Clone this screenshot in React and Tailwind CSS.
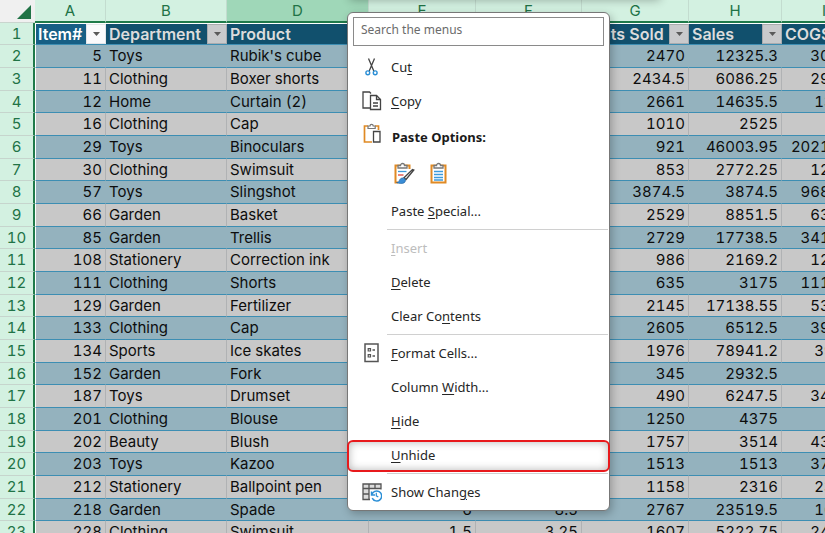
import { clsx } from 'clsx';

const columns = [
  { id: 'A', width: 'w-[71px]', title: 'Item#', filter: true, numeric: true },
  { id: 'B', width: 'w-[121px]', title: 'Department', filter: true },
  { id: 'D', width: 'w-[142px]', title: 'Product' },
  { id: 'E', width: 'w-[107px]', title: '', numeric: true },
  { id: 'F', width: 'w-[106px]', title: '', numeric: true },
  { id: 'G', width: 'w-[107px]', title: 'Units Sold', filter: true, numeric: true },
  { id: 'H', width: 'w-[93px]', title: 'Sales', filter: true, numeric: true },
  { id: 'I', width: '', title: 'COGS', numeric: true },
];

const rows = [
  ['5', 'Toys', "Rubik's cube", '', '', '2470', '12325.3', '3087.5'],
  ['11', 'Clothing', 'Boxer shorts', '', '', '2434.5', '6086.25', '2921.4'],
  ['12', 'Home', 'Curtain (2)', '', '', '2661', '14635.5', '13305'],
  ['16', 'Clothing', 'Cap', '', '', '1010', '2525', ''],
  ['29', 'Toys', 'Binoculars', '', '', '921', '46003.95', '20215.95'],
  ['30', 'Clothing', 'Swimsuit', '', '', '853', '2772.25', '1279.5'],
  ['57', 'Toys', 'Slingshot', '', '', '3874.5', '3874.5', '9686.25'],
  ['66', 'Garden', 'Basket', '', '', '2529', '8851.5', '6322.5'],
  ['85', 'Garden', 'Trellis', '', '', '2729', '17738.5', '3411.25'],
  ['108', 'Stationery', 'Correction ink', '', '', '986', '2169.2', '1232.5'],
  ['111', 'Clothing', 'Shorts', '', '', '635', '3175', '1111.25'],
  ['129', 'Garden', 'Fertilizer', '', '', '2145', '17138.55', '5362.5'],
  ['133', 'Clothing', 'Cap', '', '', '2605', '6512.5', '3907.5'],
  ['134', 'Sports', 'Ice skates', '', '', '1976', '78941.2', '39520'],
  ['152', 'Garden', 'Fork', '', '', '345', '2932.5', ''],
  ['187', 'Toys', 'Drumset', '', '', '490', '6247.5', '3430.5'],
  ['201', 'Clothing', 'Blouse', '', '', '1250', '4375', ''],
  ['202', 'Beauty', 'Blush', '', '', '1757', '3514', '4392.5'],
  ['203', 'Toys', 'Kazoo', '', '', '1513', '1513', '3782.5'],
  ['212', 'Stationery', 'Ballpoint pen', '', '', '1158', '2316', '23160'],
  ['218', 'Garden', 'Spade', '6', '8.5', '2767', '23519.5', '16602'],
  ['228', 'Clothing', 'Swimsuit', '1.5', '3.25', '1607', '5222.75', '2410.5'],
];

function FilterButton({ label, active }) {
  return (
    <button
      type="button"
      aria-label={label}
      className={clsx(
        'flex h-5 w-5 shrink-0 items-center justify-center border',
        active ? 'border-[#e4e6ea] bg-[#fafafc]' : 'border-[#a9abae] bg-[#c9cacc]'
      )}
    >
      <svg width="7" height="4" viewBox="0 0 7 4">
        <path d="M0 0h7L3.500 4z" fill="#5a5a5a" />
      </svg>
    </button>
  );
}

function Sheet() {
  return (
    <table className="w-full min-w-[867px] table-fixed border-separate border-spacing-0 text-[15px] leading-5 tabular-nums">
      <colgroup>
        <col className="w-[35px]" />
        {columns.map((col) => (
          <col key={col.id} className={col.width} />
        ))}
      </colgroup>
      <thead>
        <tr className="h-[23px] text-[#217346]">
          <th className="border-b border-[#c9d5ce] bg-[#f0f0f0] p-0 align-top">
            <svg className="mt-1 ml-4" width="16" height="16" viewBox="0 0 16 16" aria-hidden="true">
              <path d="M15 1v14H1z" fill="#217346" />
            </svg>
          </th>
          {columns.map((col) => (
            <th
              key={col.id}
              scope="col"
              className={clsx(
                'border-r border-b-2 border-r-[#c3dccf] border-b-[#1f7a4a] p-0 pt-px font-normal',
                col.id === 'D' ? 'bg-[#9fd7b8]' : 'bg-[#d3f1e1]'
              )}
            >
              {col.id}
            </th>
          ))}
        </tr>
      </thead>
      <tbody>
        <tr className="h-[22px]">
          <RowNumber n={1} />
          {columns.map((col, i) => (
            <th
              key={col.id}
              scope="col"
              className={clsx(
                'border-t border-b border-t-white border-b-[#3d8eb3] p-0 text-base leading-5 font-semibold',
                i === 0 ? 'border-l border-l-white bg-[#175f85] text-white' : 'bg-[#11506d] text-[#dcdcdc]'
              )}
            >
              <div className={clsx('flex h-5 items-center justify-between whitespace-nowrap', i === 0 ? 'pl-0.5' : 'pl-[3px]')}>
                <span>{col.title}</span>
                {col.filter && <FilterButton label={`Filter ${col.title}`} active={i === 0} />}
              </div>
            </th>
          ))}
        </tr>
        {rows.map((row, r) => (
          <tr
            key={row[0]}
            className={clsx(r % 3 === 2 ? 'h-[22px]' : 'h-[23px]', r % 2 ? 'bg-[#c8c8c8]' : 'bg-[#94b2be]')}
          >
            <RowNumber n={r + 2} />
            {row.map((value, i) => (
              <td
                key={columns[i].id}
                className={clsx(
                  'border-r border-b border-b-[#3d8eb3] px-[3px] py-0 whitespace-nowrap text-[#0d0d0d]',
                  r % 2 ? 'border-r-[#b0b2b4]' : 'border-r-[#94b2be]',
                  i === 0 && 'border-l border-l-white',
                  columns[i].numeric && 'text-right'
                )}
              >
                {value}
              </td>
            ))}
          </tr>
        ))}
      </tbody>
    </table>
  );
}

function RowNumber({ n }) {
  return (
    <th
      scope="row"
      className="border-r-2 border-b border-r-[#1f7a4a] border-b-[#c6d5cd] bg-[#d3f1e1] p-0 font-normal text-[#217346]"
    >
      {n}
    </th>
  );
}

function CutIcon() {
  return (
    <svg width="20" height="20" viewBox="0 0 20 20" fill="none">
      <path d="M6.500 1.500l5.300 12.500M12.500 1.500L7.200 14" stroke="#444" strokeWidth="1.300" />
      <circle cx="5.800" cy="15.800" r="1.900" stroke="#2b8fd6" strokeWidth="1.400" />
      <circle cx="13.200" cy="15.800" r="1.900" stroke="#2b8fd6" strokeWidth="1.400" />
    </svg>
  );
}

function CopyIcon() {
  return (
    <svg width="20" height="20" viewBox="0 0 20 20" fill="none" stroke="#444" strokeWidth="1.300">
      <path d="M8 17H1V1h6.500l1.500 1.500" />
      <path d="M8.500 4.500h6l4 4V18.500h-10z" fill="#fff" />
      <path d="M14.500 4.500v4h4M11 12h5M11 15h5" />
    </svg>
  );
}

function PasteIcon() {
  return (
    <svg width="20" height="20" viewBox="0 0 20 20" fill="none">
      <path d="M6 3H2.500v16H10M13 3h3.500v4" stroke="#e08a24" strokeWidth="1.700" />
      <path d="M6 5.500V3h2a1.600 1.600 0 0 1 3.200 0h2v2.500z" fill="#fff" stroke="#777" strokeWidth="1.200" />
      <path d="M11.500 8.500h6.500V19h-6.500z" fill="#fff" stroke="#444" strokeWidth="1.300" />
    </svg>
  );
}

function ClipboardIcon() {
  return (
    <svg width="20" height="22" viewBox="0 0 20 22" fill="none">
      <path d="M2.500 3.500h14v17h-14z" fill="#fff" stroke="#e08a24" strokeWidth="2" />
      <path d="M5 6V3.500h2.500a2 2 0 0 1 4 0H14V6z" fill="#fff" stroke="#777" strokeWidth="1.300" />
      <path d="M5 9.500h9M5 12.500h9M5 15.500h9M5 18h9" stroke="#3c9bdc" strokeWidth="1.300" />
    </svg>
  );
}

function ClipboardBrushIcon() {
  return (
    <svg width="22" height="22" viewBox="0 0 22 22" fill="none">
      <path d="M2.500 3.500h14v17h-14z" fill="#fff" />
      <path d="M16.500 7V3.500h-14v17H5" stroke="#e08a24" strokeWidth="2" />
      <path d="M5 6V3.500h2.500a2 2 0 0 1 4 0H14V6z" fill="#fff" stroke="#777" strokeWidth="1.300" />
      <path d="M5 9.500h8.500" stroke="#3c9bdc" strokeWidth="1.300" />
      <path d="M5 13h5.500" stroke="#e0453c" strokeWidth="1.300" />
      <path d="M20.800 8l-7.800 9.500-2-1.700L19.500 7.500z" fill="#fff" stroke="#444" strokeWidth="1.300" />
      <path d="M3.500 20.500c2.200 0 2.400-1.300 3.300-3 1-1.700 3.600-2.200 5-.8 1.300 1.500.6 3.400-.8 4.200-2.200 1-5.300.7-7.500-.4z" fill="#3a8dd6" stroke="#1e5f9c" strokeWidth=".6" />
    </svg>
  );
}

function FormatCellsIcon() {
  return (
    <svg width="20" height="20" viewBox="0 0 20 20" fill="none" stroke="#555">
      <path d="M3 1h13v17.500H3z" strokeWidth="1.500" />
      <path d="M6.200 5.700h2.300v2.300H6.200zM6.200 11.700h2.300v2.300H6.200z" strokeWidth="1.200" />
      <path d="M10.500 7H13M10.500 13H13" strokeWidth="1.300" />
    </svg>
  );
}

function ShowChangesIcon() {
  return (
    <svg width="20" height="20" viewBox="0 0 20 20" fill="none">
      <path d="M1 2h18v4.500H1zM1 6.500h6v11H1z" fill="#dcdcdc" />
      <path d="M8 17.500H1V2h18v5.500M1 6.500h18M1 12h6M7 2v15.500M13 2v5" stroke="#555" strokeWidth="1.300" />
      <path d="M9.500 9.500v3.500H13" stroke="#2b8fd6" strokeWidth="1.400" />
      <path d="M9.800 12.800a5 5 0 1 1 .4 3.400" stroke="#2b8fd6" strokeWidth="1.500" />
      <path d="M14.300 10.800v3l2 1.200" stroke="#2b8fd6" strokeWidth="1.200" />
    </svg>
  );
}

// label is split as [before, access key, after]
function MenuItem({ label, icon, disabled, highlighted }) {
  const [before, accessKey, after] = label;
  return (
    <button
      type="button"
      role="menuitem"
      disabled={disabled}
      className={clsx(
        'relative flex h-[34px] w-full items-center gap-[9px] pl-[14px] text-left',
        disabled ? 'text-[#bdbdbd]' : 'text-[#262626]'
      )}
    >
      {highlighted && (
        <span className="absolute -inset-x-px top-0.5 bottom-0 rounded-md border-2 border-[#e8191c] shadow-[inset_0_0_8px_rgba(0,0,0,0.3)]" />
      )}
      <span className="flex h-5 w-5 shrink-0">{icon}</span>
      <span>
        {before}
        <span className="underline underline-offset-2">{accessKey}</span>
        {after}
      </span>
    </button>
  );
}

function Separator() {
  return <div role="separator" className="my-px mr-px ml-[39px] h-px bg-[#d0d0d0]" />;
}

function ContextMenu() {
  return (
    <div
      role="menu"
      className="absolute top-3 left-[347px] w-[263px] rounded-md border border-[#777] bg-white pt-1 pb-px text-[13px] leading-5 shadow-[2px_3px_8px_rgba(0,0,0,0.25)]"
      style={{ fontFamily: '"Noto Sans", "Open Sans", sans-serif' }}
    >
      <div className="mb-1 px-[5px]">
        <input
          type="text"
          aria-label="Search the menus"
          placeholder="Search the menus"
          className="block h-[29px] w-full border border-[#8a8a8a] px-[7px] pb-1 text-xs text-[#262626] placeholder:text-[#6b6b6b]"
        />
      </div>
      <MenuItem label={['Cu', 't', '']} icon={<CutIcon />} />
      <MenuItem label={['', 'C', 'opy']} icon={<CopyIcon />} />
      <div className="flex h-[38px] items-center gap-[10px] pl-[14px] font-bold text-[#1a1a1a]">
        <span className="mb-2 flex h-5 w-5">
          <PasteIcon />
        </span>
        Paste Options:
      </div>
      <div className="flex h-[38px] items-start gap-[14px] pt-1.5 pl-[45px]">
        <button type="button" aria-label="Paste, keep formatting">
          <ClipboardBrushIcon />
        </button>
        <button type="button" aria-label="Paste">
          <ClipboardIcon />
        </button>
      </div>
      <MenuItem label={['Paste ', 'S', 'pecial...']} />
      <Separator />
      <MenuItem label={['', 'I', 'nsert']} disabled />
      <MenuItem label={['', 'D', 'elete']} />
      <MenuItem label={['Clear Co', 'n', 'tents']} />
      <Separator />
      <MenuItem label={['', 'F', 'ormat Cells...']} icon={<FormatCellsIcon />} />
      <MenuItem label={['Column ', 'W', 'idth...']} />
      <MenuItem label={['', 'H', 'ide']} />
      <MenuItem label={['', 'U', 'nhide']} highlighted />
      <Separator />
      <MenuItem label={['Show Chan', 'g', 'es']} icon={<ShowChangesIcon />} />
    </div>
  );
}

export default function App() {
  return (
    <main
      className="relative h-screen overflow-hidden bg-white"
      style={{ fontFamily: 'Inter, "Liberation Sans", sans-serif' }}
    >
      <Sheet />
      <div className="absolute -top-4 left-[350px] h-4 w-[310px] shadow-[0_0_10px_rgba(0,0,0,0.3)]" />
      <ContextMenu />
    </main>
  );
}
